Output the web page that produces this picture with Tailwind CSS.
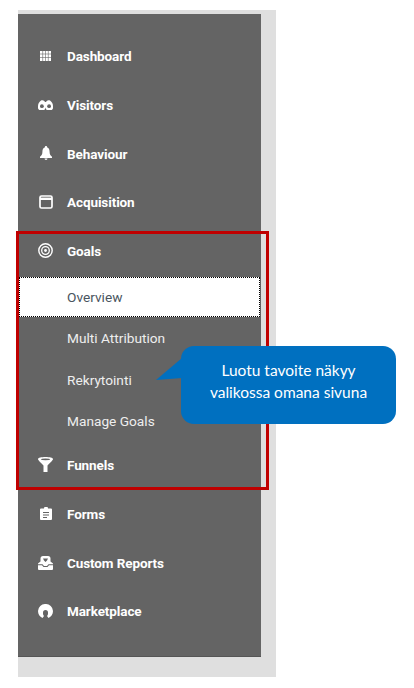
<!DOCTYPE html>
<html lang="en">
<head>
<meta charset="UTF-8">
<title>Goals menu</title>
<script src="https://cdn.jsdelivr.net/npm/@tailwindcss/browser@4"></script>
</head>
<body class="bg-white font-['Roboto',sans-serif]">
<div class="relative w-[414px] h-[688px] overflow-hidden">
  <div class="absolute left-[18px] top-[10px] w-[258px] h-[667px] bg-[#dfdfdf] pt-[4px]">
    <nav class="w-[243px] h-[643px] bg-[#646464] border-b border-[#555] pt-[18px] text-white text-[13.5px] font-bold tracking-[-0.1px]">
      <a class="flex items-center h-[49px]">
        <span class="w-[49px] flex justify-center pl-[6px] mb-[2px]">
          <svg width="11" height="10" viewBox="0 0 11 10" fill="#fff"><path d="M0 0h11v10H0z"/><path d="M0 3h11M0 6.500h11M2.700 0v10M5.500 0v10M8.300 0v10" stroke="#646464" stroke-width=".6"/></svg>
        </span>Dashboard
      </a>
      <a class="flex items-center h-[49px]">
        <span class="w-[49px] flex justify-center pl-[6px] mb-[2px]">
          <svg width="15" height="10" viewBox="0 0 15 10"><path fill="#fff" d="M3 .500C4 0 5.500 0 6.300 1l.7 1h1l.7-1C9.500 0 11 0 12 .500 14 2 15 4 15 6.200A3.800 3.800 0 0 1 7.500 7.500 3.800 3.800 0 0 1 0 6.200C0 4 1 2 3 .500z"/><circle cx="3.900" cy="6.200" r="1.900" fill="#646464"/><circle cx="11.100" cy="6.200" r="1.900" fill="#646464"/></svg>
        </span>Visitors
      </a>
      <a class="flex items-center h-[48px]">
        <span class="w-[49px] flex justify-center pl-[6px] mb-[2px]">
          <svg width="12" height="14" viewBox="0 0 12 14" fill="#fff"><path d="M6 0a1 1 0 0 1 1 1.300C9 2 9.600 3.800 9.600 6c0 2.200.8 3.500 2.400 4.800V12H0v-1.200C1.600 9.500 2.400 8.200 2.400 6 2.400 3.800 3 2 5 1.300A1 1 0 0 1 6 0zM4.500 12.600h3a1.500 1.300 0 0 1-3 0z"/></svg>
        </span>Behaviour
      </a>
      <a class="flex items-center h-[49px]">
        <span class="w-[49px] flex justify-center pl-[6px] mb-[2px]">
          <svg width="14" height="14" viewBox="0 0 14 14" fill="none"><rect x="1" y="1" width="12" height="12" rx="1.500" stroke="#fff" stroke-width="1.700"/><path d="M1 3.800h12" stroke="#fff" stroke-width="2.400"/></svg>
        </span>Acquisition
      </a>
      <a class="flex items-center h-[49px] mb-[1px]">
        <span class="w-[49px] flex justify-center pl-[6px] mb-[2px]">
          <svg width="15" height="15" viewBox="0 0 15 15" fill="none" stroke="#fff"><circle cx="7.500" cy="7.500" r="6.700" stroke-width="1.400"/><circle cx="7.500" cy="7.500" r="3.800" stroke-width="1.300"/><circle cx="7.500" cy="7.500" r="1.400" fill="#fff" stroke="none"/></svg>
        </span>Goals
      </a>
      <a class="flex items-center h-[40px] ml-[1px] w-[241px] bg-white border border-dotted border-black pl-[47px] font-normal text-[13.7px] text-[#4a5560] tracking-normal">Overview</a>
      <div class="mt-[1px] font-normal text-[13.7px] text-[#eeeeee] tracking-normal">
        <a class="flex items-center h-[41px] pl-[49px]">Multi Attribution</a>
        <a class="flex items-center h-[42px] pt-[1px] pl-[49px]">Rekrytointi</a>
        <a class="flex items-center h-[41px] pl-[49px]">Manage Goals</a>
      </div>
      <a class="flex items-center h-[49px] mt-[-1px]">
        <span class="w-[49px] flex justify-center pl-[6px] mb-[2px]">
          <svg width="15" height="15" viewBox="0 0 15 15" fill="#fff"><path d="M7.500 0C11.600 0 15 .8 15 2c0 1.500-3.800 4.500-5.500 6.500V15h-4V8.500C3.800 6.500 0 3.500 0 2 0 .8 3.400 0 7.500 0z"/><ellipse cx="7.500" cy="2.300" rx="4.500" ry=".9" fill="#646464"/></svg>
        </span>Funnels
      </a>
      <a class="flex items-center h-[49px]">
        <span class="w-[49px] flex justify-center pl-[6px] mb-[2px]">
          <svg width="12" height="13" viewBox="0 0 12 13" fill="#fff"><path d="M1 1.500h3a2 2 0 0 1 4 0h3a1 1 0 0 1 1 1V12a1 1 0 0 1-1 1H1a1 1 0 0 1-1-1V2.500a1 1 0 0 1 1-1z"/><path d="M3 5.500h6M3 8h6M3 10.500h4" stroke="#646464" stroke-width="1"/></svg>
        </span>Forms
      </a>
      <a class="flex items-center h-[49px]">
        <span class="w-[49px] flex justify-center pl-[6px] mb-[2px]">
          <svg width="15" height="14" viewBox="0 0 15 14" fill="#fff"><path d="M2.500 5.500V2.500A2.500 2.500 0 0 1 5 0h5a2.500 2.500 0 0 1 2.500 2.500v3L15 7.500V13a1 1 0 0 1-1 1H1a1 1 0 0 1-1-1V7.500z"/><path d="M5 2.500h5L9 4.500 7.500 6 6 4.500zM0 8.300h4.500L6 10h3l1.500-1.700H15v.9h-4L9.500 11h-4L4 9.200H0z" fill="#646464"/></svg>
        </span>Custom Reports
      </a>
      <a class="flex items-center h-[47px]">
        <span class="w-[49px] flex justify-center pl-[6px] mb-[2px]">
          <svg width="15" height="14" viewBox="0 0 15 14" fill="#fff"><path d="M7.500 0A7.200 7.200 0 0 1 15 7c0 3-1.700 5.700-4.500 7L9 12c1-.8 1-1.800 1-3.500a2.500 2.500 0 0 0-5 0c0 1.700 0 2.700 1 3.500l-1.500 2C1.700 12.700 0 10 0 7A7.200 7.200 0 0 1 7.500 0z"/></svg>
        </span>Marketplace
      </a>
    </nav>
  </div>

  <div class="absolute left-[16px] top-[231px] w-[253px] h-[259px] border-[3px] border-[#c00000]"></div>

  <svg class="absolute left-[155px] top-[355px]" width="28" height="28" viewBox="0 0 28 28" fill="#0070c0"><path d="M27 3 1 25l26-2z"/></svg>
  <div class="absolute left-[181px] top-[346px] w-[215px] h-[78px] rounded-[13px] bg-[#0070c0] flex items-center justify-center pb-[8px] text-center text-white text-[15.500px] leading-[22px] font-['Lato',sans-serif]">
    <p>Luotu tavoite näkyy<br>valikossa omana sivuna</p>
  </div>
</div>
</body>
</html>
